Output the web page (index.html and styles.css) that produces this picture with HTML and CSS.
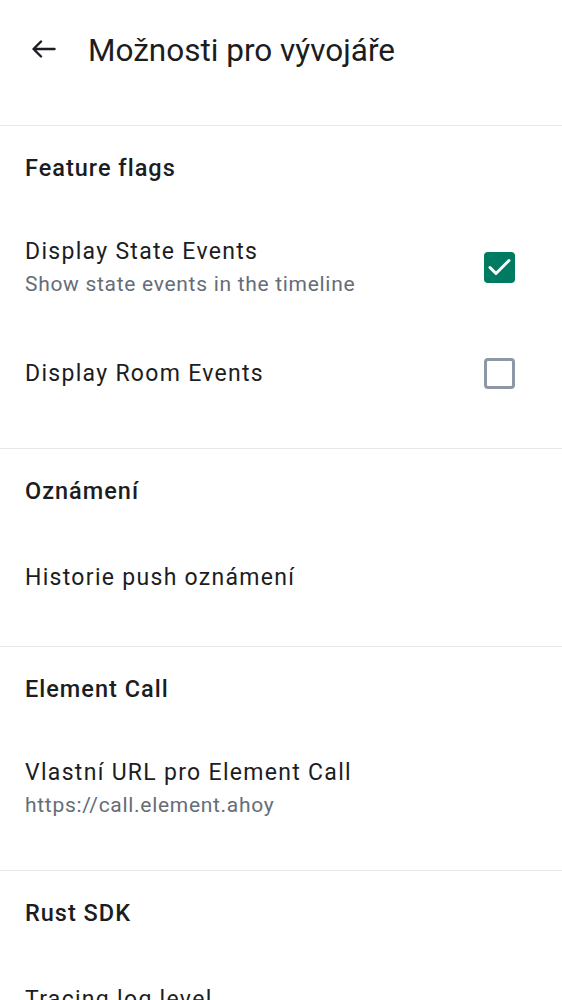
FILE: index.html
```html
<!DOCTYPE html>
<html lang="cs">
<head>
<meta charset="utf-8">
<link rel="stylesheet" href="styles.css">
</head>
<body>
<div class="app">
  <header class="topbar">
    <svg class="back" width="24" height="24" viewBox="0 0 24 24"><path d="M22.5 12H1.8M9 4.5L1.5 12 9 19.5" fill="none" stroke="#1b1d22" stroke-width="2.4" stroke-linecap="round" stroke-linejoin="round"/></svg>
    <h1 class="title">Možnosti pro vývojáře</h1>
  </header>

  <section class="section">
    <div class="sec-head">Feature flags</div>
    <div class="item two">
      <div class="texts">
        <div class="item-title">Display State Events</div>
        <div class="item-sub">Show state events in the timeline</div>
      </div>
      <span class="cb checked"><svg width="31" height="31" viewBox="0 0 31 31"><path d="M6 15.5l6 6 13-13" fill="none" stroke="#fff" stroke-width="3" stroke-linecap="round" stroke-linejoin="round"/></svg></span>
    </div>
    <div class="item one">
      <div class="texts">
        <div class="item-title">Display Room Events</div>
      </div>
      <span class="cb"></span>
    </div>
  </section>

  <section class="section">
    <div class="sec-head">Oznámení</div>
    <div class="item one">
      <div class="texts">
        <div class="item-title">Historie push oznámení</div>
      </div>
    </div>
  </section>

  <section class="section">
    <div class="sec-head">Element Call</div>
    <div class="item two">
      <div class="texts">
        <div class="item-title">Vlastní URL pro Element Call</div>
        <div class="item-sub">https://call.element.ahoy</div>
      </div>
    </div>
  </section>

  <section class="section">
    <div class="sec-head">Rust SDK</div>
    <div class="item one">
      <div class="texts">
        <div class="item-title">Tracing log level</div>
      </div>
    </div>
  </section>
</div>
</body>
</html>
```

FILE: styles.css
```css
* { box-sizing: border-box; }
html, body { margin: 0; padding: 0; background: #fff; }
body {
  font-family: Roboto, "Noto Sans", sans-serif;
  color: #1b1d22;
  width: 562px;
  height: 1000px;
  overflow: hidden;
}
.topbar {
  height: 125px;
  display: flex;
  align-items: flex-start;
  padding: 38px 0 0 32px;
}
.back { width: 24px; height: 24px; margin-top: -1px; flex: none; }
.title {
  margin: 0 0 0 32px;
  font-size: 31.5px;
  font-weight: 400;
  line-height: 26px;
  letter-spacing: 0;
}
.section {
  border-top: 1px solid #e7e8ea;
  padding-bottom: 22px;
}
.section:first-of-type { padding-bottom: 28px; }
.sec-head {
  height: 82px;
  padding: 29px 25px 0;
  font-size: 23.5px;
  font-weight: 500;
  line-height: 26px;
  letter-spacing: 1px;
}
.item {
  display: flex;
  align-items: center;
  padding: 0 47px 0 25px;
}
.item.one { height: 93px; }
.item.two { height: 119px; }
.texts { flex: 1; }
.item-title {
  font-size: 23px;
  line-height: 32px;
  letter-spacing: 1.3px;
}
.item-sub {
  font-size: 21px;
  line-height: 32px;
  color: #656d77;
  letter-spacing: 0.7px;
}
.cb {
  width: 31px;
  height: 31px;
  border: 3px solid #8d97a5;
  border-radius: 4px;
  flex: none;
}
.cb.checked {
  background: #007a61;
  border: none;
  display: flex;
}
```
